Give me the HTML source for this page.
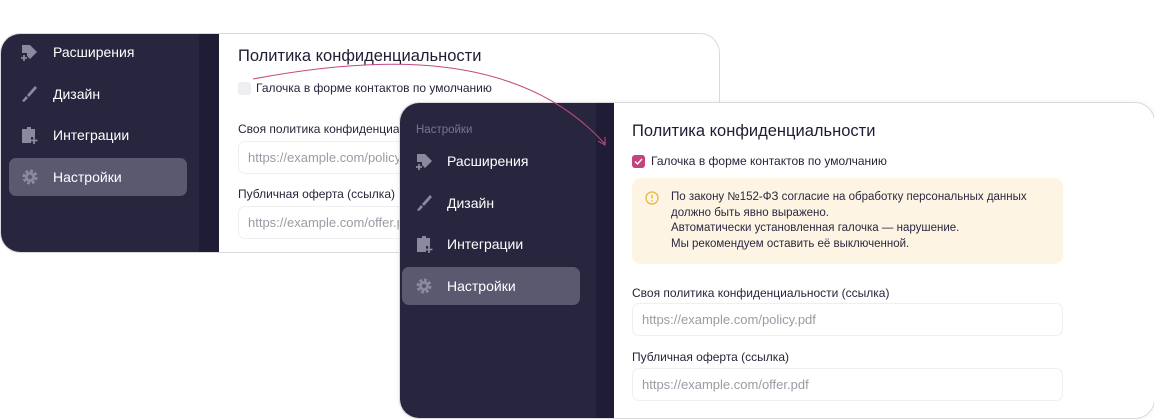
<!DOCTYPE html>
<html><head><meta charset="utf-8"><style>
*{box-sizing:border-box;margin:0;padding:0}
body{width:1154px;height:419px;background:#fff;position:relative;overflow:hidden;font-family:"Liberation Sans","DejaVu Sans",sans-serif;color:#1e1d33}
.card{position:absolute;border:1px solid #d9d9de;border-radius:20px;overflow:hidden;background:#fff}
.side{position:absolute;left:0;top:0;bottom:0;background:#28263f}
.strip{position:absolute;top:0;bottom:0;background:#1f1d35}
.item{position:absolute;height:38px;border-radius:7px;color:#fff;font-size:14px;display:flex;align-items:center}
.item.act{background:#5a5970}
.item svg{position:absolute;left:14px}
.item span{position:absolute}
.t{position:absolute;font-size:16.5px;font-weight:500;color:#1e1d33}
.cb{position:absolute;width:13px;height:13px;border-radius:3px}
.lbl{position:absolute;font-size:12px;color:#26253a}
.inp{position:absolute;height:33px;border:1px solid #efeff2;border-radius:7px;font-size:13px;color:#9b9ba5;padding-left:9px;line-height:31px;background:#fff}
</style></head><body>
<svg width="0" height="0" style="position:absolute"><defs>
<g id="ext"><path d="M1 2h8l7 7-7 7-3-3v-3H1z" fill="#8a89a0"/><path d="M3 12v6M0 15h6" stroke="#8a89a0" stroke-width="1.8"/></g>
<g id="brush"><path d="M14 1L6 10l2 2 8-9z" fill="#8a89a0"/><path d="M5 11l2 2-4 4-2-1z" fill="#8a89a0"/></g>
<g id="int"><path d="M1 3h5v-2h4v2h4v8h-4v6H1z" fill="#8a89a0"/><path d="M13 11v7M9.5 14.5h7" stroke="#8a89a0" stroke-width="1.8"/></g>
<g id="gear"><circle cx="9" cy="9" r="5.5" fill="none" stroke="#8a89a0" stroke-width="4" stroke-dasharray="2.6 1.7"/><circle cx="9" cy="9" r="5" fill="#8a89a0"/><circle cx="9" cy="9" r="2.2" fill="#5a5970"/></g>
</defs></svg>

<div class="card" style="left:0;top:33px;width:720px;height:220px">
 <div class="side" style="width:198px"></div><div class="strip" style="left:198px;width:20px"></div>
 <div class="item" style="left:0;top:-1px;width:198px"><svg width="18" height="18" style="left:20px"><use href="#ext"/></svg><span style="left:52px">Расширения</span></div>
 <div class="item" style="left:0;top:41px;width:198px"><svg width="18" height="18" style="left:20px"><use href="#brush"/></svg><span style="left:52px">Дизайн</span></div>
 <div class="item" style="left:0;top:82px;width:198px"><svg width="18" height="18" style="left:20px"><use href="#int"/></svg><span style="left:52px">Интеграции</span></div>
 <div class="item act" style="left:8px;top:124px;width:178px"><svg width="18" height="18" style="left:12px"><use href="#gear"/></svg><span style="left:44px">Настройки</span></div>
 <div class="t" style="left:237px;top:13px">Политика конфиденциальности</div>
 <div class="cb" style="left:237px;top:48px;background:#eeeef1"></div>
 <div class="lbl" style="left:255px;top:47px">Галочка в форме контактов по умолчанию</div>
 <div class="lbl" style="left:237px;top:88px">Своя политика конфиденциальности (ссылка)</div>
 <div class="inp" style="left:237px;top:107px;width:440px">https://example.com/policy.pdf</div>
 <div class="lbl" style="left:237px;top:153px">Публичная оферта (ссылка)</div>
 <div class="inp" style="left:237px;top:172px;width:440px">https://example.com/offer.pdf</div>
</div>

<div class="card" style="left:399px;top:102px;width:756px;height:317px;box-shadow:0 0 6px rgba(0,0,0,.06)">
 <div class="side" style="width:196px"></div><div class="strip" style="left:196px;width:18px"></div>
 <div style="position:absolute;left:16px;top:21px;font-size:11.5px;color:#77768d">Настройки</div>
 <div class="item" style="left:0;top:39px;width:196px"><svg width="18" height="18" style="left:16px"><use href="#ext"/></svg><span style="left:47px">Расширения</span></div>
 <div class="item" style="left:0;top:81px;width:196px"><svg width="18" height="18" style="left:16px"><use href="#brush"/></svg><span style="left:47px">Дизайн</span></div>
 <div class="item" style="left:0;top:122px;width:196px"><svg width="18" height="18" style="left:16px"><use href="#int"/></svg><span style="left:47px">Интеграции</span></div>
 <div class="item act" style="left:2px;top:164px;width:178px"><svg width="18" height="18" style="left:13px"><use href="#gear"/></svg><span style="left:45px">Настройки</span></div>
 <div class="t" style="left:232px;top:19px">Политика конфиденциальности</div>
 <div class="cb" style="left:232px;top:52px;background:#c2447c"><svg width="13" height="13"><path d="M3 6.5l2.5 2.5 4.5-5" stroke="#fff" stroke-width="1.4" fill="none"/></svg></div>
 <div class="lbl" style="left:251px;top:51px">Галочка в форме контактов по умолчанию</div>
 <div style="position:absolute;left:232px;top:75px;width:431px;height:86px;background:#fdf4e3;border-radius:9px"></div>
 <svg style="position:absolute;left:245px;top:88px" width="14" height="14"><circle cx="7" cy="7" r="6" fill="none" stroke="#e8b53c" stroke-width="1.3"/><path d="M7 3.8v3.6" stroke="#e8b53c" stroke-width="1.4"/><circle cx="7" cy="9.8" r=".8" fill="#e8b53c"/></svg>
 <div style="position:absolute;left:271px;top:87px;font-size:11.5px;line-height:15.7px;color:#2a2940">По закону №152-ФЗ согласие на обработку персональных данных<br>должно быть явно выражено.<br>Автоматически установленная галочка — нарушение.<br>Мы рекомендуем оставить её выключенной.</div>
 <div class="lbl" style="left:232px;top:183px">Своя политика конфиденциальности (ссылка)</div>
 <div class="inp" style="left:232px;top:200px;width:431px">https://example.com/policy.pdf</div>
 <div class="lbl" style="left:232px;top:247px">Публичная оферта (ссылка)</div>
 <div class="inp" style="left:232px;top:265px;width:431px">https://example.com/offer.pdf</div>
</div>

<svg style="position:absolute;left:0;top:0" width="1154" height="419"><path d="M253 79 C 380 55, 520 50, 605 144" fill="none" stroke="#c24a80" stroke-width="1"/><path d="M598 141l7 4 0-8" fill="none" stroke="#c24a80" stroke-width="1"/></svg>
</body></html>
